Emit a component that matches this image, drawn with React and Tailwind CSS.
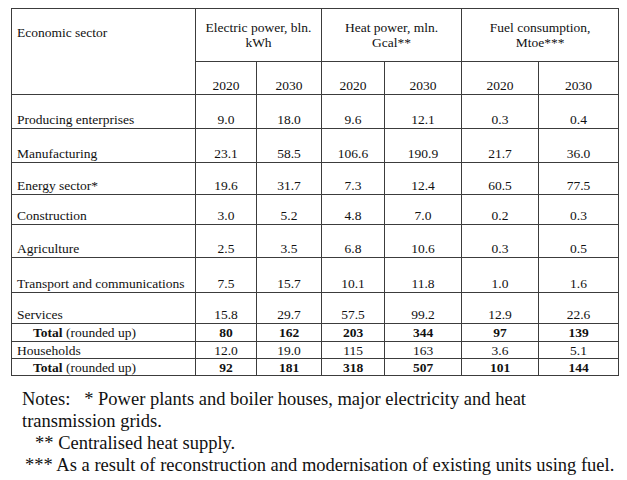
const rows = [
  { name: 'Producing enterprises', h: 'h-[34px]', v: ['9.0', '18.0', '9.6', '12.1', '0.3', '0.4'] },
  { name: 'Manufacturing', h: 'h-[34px]', v: ['23.1', '58.5', '106.6', '190.9', '21.7', '36.0'] },
  { name: 'Energy sector*', h: 'h-[32px]', v: ['19.6', '31.7', '7.3', '12.4', '60.5', '77.5'] },
  { name: 'Construction', h: 'h-[30px]', v: ['3.0', '5.2', '4.8', '7.0', '0.2', '0.3'] },
  { name: 'Agriculture', h: 'h-[33px]', v: ['2.5', '3.5', '6.8', '10.6', '0.3', '0.5'] },
  { name: 'Transport and communications', h: 'h-[35px]', v: ['7.5', '15.7', '10.1', '11.8', '1.0', '1.6'] },
  { name: 'Services', h: 'h-[31px]', v: ['15.8', '29.7', '57.5', '99.2', '12.9', '22.6'] },
];

const cell = 'border border-[#3c3c3c] p-0';

const TotalRow = ({ values, h }) => (
  <tr>
    <td className={`${cell} ${h} pl-[21px] align-middle`}>
      <b>Total</b> (rounded up)
    </td>
    {values.map((v, i) => (
      <td key={i} className={`${cell} text-center font-bold align-middle`}>{v}</td>
    ))}
  </tr>
);

const App = () => {
  return (
    <div className="w-[627px] h-[480px] bg-white text-[#111] font-['Liberation_Serif',serif] overflow-hidden">
      <div className="pl-[11px] pt-[8px]">
        <table className="table-fixed border-collapse w-[607px] text-[13.5px] leading-[15px]">
          <colgroup>
            <col className="w-[184px]" />
            <col className="w-[61px]" />
            <col className="w-[65px]" />
            <col className="w-[63px]" />
            <col className="w-[77px]" />
            <col className="w-[77px]" />
            <col className="w-[80px]" />
          </colgroup>
          <thead>
            <tr>
              <td rowSpan={2} className={`${cell} align-top pl-[5px] pt-[16px]`}>Economic sector</td>
              <td colSpan={2} className={`${cell} h-[53px] text-center align-middle px-2`}>Electric power, bln. kWh</td>
              <td colSpan={2} className={`${cell} text-center align-middle px-4`}>Heat power, mln. Gcal**</td>
              <td colSpan={2} className={`${cell} text-center align-middle px-6`}>Fuel consumption, Mtoe***</td>
            </tr>
            <tr>
              {['2020', '2030', '2020', '2030', '2020', '2030'].map((y, i) => (
                <td key={i} className={`${cell} h-[33px] text-center align-bottom pb-[1px]`}>{y}</td>
              ))}
            </tr>
          </thead>
          <tbody>
            {rows.map((r) => (
              <tr key={r.name}>
                <td className={`${cell} ${r.h} align-bottom pl-[5px] pb-[1px]`}>{r.name}</td>
                {r.v.map((v, i) => (
                  <td key={i} className={`${cell} text-center align-bottom pb-[1px]`}>{v}</td>
                ))}
              </tr>
            ))}
            <TotalRow h="h-[18px]" values={['80', '162', '203', '344', '97', '139']} />
            <tr>
              <td className={`${cell} h-[17px] pl-[5px] align-middle`}>Households</td>
              {['12.0', '19.0', '115', '163', '3.6', '5.1'].map((v, i) => (
                <td key={i} className={`${cell} text-center align-middle`}>{v}</td>
              ))}
            </tr>
            <TotalRow h="h-[17px]" values={['92', '181', '318', '507', '101', '144']} />
          </tbody>
        </table>
      </div>

      {/* Notes */}
      <div className="mt-[12px] pl-[22px] text-[18.5px] leading-[22px]">
        <div className="whitespace-pre">Notes:   * Power plants and boiler houses, major electricity and heat</div>
        <div>transmission grids.</div>
        <div className="pl-[13px]">** Centralised heat supply.</div>
        <div className="ml-[3px]">*** As a result of reconstruction and modernisation of existing units using fuel.</div>
      </div>
    </div>
  );
};

export default App;
